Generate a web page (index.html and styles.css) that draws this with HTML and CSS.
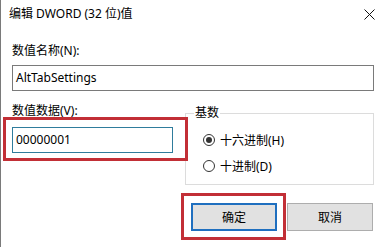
FILE: index.html
```html
<!DOCTYPE html>
<html lang="zh-CN">
<head>
<meta charset="utf-8">
<title>编辑 DWORD (32 位)值</title>
<link rel="stylesheet" href="styles.css">
</head>
<body>
<div class="window">
  <div class="titlebar">
    <span class="title">编辑 DWORD (32 位)值</span>
    <svg class="close" width="11" height="11" viewBox="0 0 11 11"><path d="M0.5 0.5 L10.5 10.5 M10.5 0.5 L0.5 10.5" stroke="#111" stroke-width="1" fill="none"/></svg>
  </div>
  <div class="content">
    <div class="label first">数值名称(N):</div>
    <div class="input name">AltTabSettings</div>
    <div class="row">
      <div class="col-left">
        <div class="label">数值数据(V):</div>
        <div class="input data">00000001</div>
      </div>
      <fieldset class="group">
        <legend>基数</legend>
        <div class="radio"><span class="dot checked"></span><span>十六进制(H)</span></div>
        <div class="radio"><span class="dot"></span><span>十进制(D)</span></div>
      </fieldset>
    </div>
    <div class="buttons">
      <div class="btn default">确定</div>
      <div class="btn">取消</div>
    </div>
  </div>
  <div class="mark mark-data"></div>
  <div class="mark mark-ok"></div>
</div>
</body>
</html>
```
FILE: styles.css
```css
html, body {
  margin: 0;
  padding: 0;
  background: #fff;
}
body {
  font-family: "Noto Sans", "Noto Sans CJK SC", sans-serif;
  font-size: 12px;
  color: #000;
}
.window {
  position: relative;
  width: 384px;
  height: 247px;
  box-sizing: border-box;
  border-left: 1px solid #7a7a7a;
  background: #fff;
  overflow: hidden;
}
.titlebar {
  height: 28px;
  display: flex;
  align-items: center;
  justify-content: space-between;
  padding: 0 9px 0 8px;
}
.title {
  line-height: 16px;
}
.close {
  display: block;
}
.content {
  padding: 0 10px 0 11px;
}
.label {
  line-height: 16px;
  height: 16px;
}
.label.first {
  margin-top: 15px;
}
.input {
  box-sizing: border-box;
  height: 26px;
  line-height: 24px;
  padding-left: 3px;
  border: 1px solid #7a7a7a;
  margin-top: 6px;
}
.row {
  display: flex;
  align-items: flex-start;
  margin-top: 12px;
}
.col-left {
  width: 173px;
  flex: none;
}
.input.data {
  width: 161px;
  margin-top: 8px;
  border-color: #2f7c9c;
}
.group {
  margin: 2px 0 0 0;
  padding: 6px 0 0 17px;
  width: 189px;
  height: 80px;
  box-sizing: border-box;
  border: 1px solid #dcdcdc;
}
.group legend {
  padding: 0 1px;
  margin-left: -9px;
  line-height: 16px;
}
.radio {
  display: flex;
  align-items: center;
  gap: 5px;
  height: 26px;
}
.dot {
  box-sizing: border-box;
  width: 12px;
  height: 12px;
  border: 1px solid #333;
  border-radius: 50%;
  display: flex;
  align-items: center;
  justify-content: center;
}
.dot.checked::after {
  content: "";
  width: 6px;
  height: 6px;
  border-radius: 50%;
  background: #333;
}
.buttons {
  display: flex;
  justify-content: flex-end;
  gap: 10px;
  margin-top: 18px;
  padding-right: 1px;
}
.btn {
  box-sizing: border-box;
  width: 86px;
  height: 28px;
  border: 1px solid #adadad;
  background: #e1e1e1;
  display: flex;
  align-items: center;
  justify-content: center;
}
.btn.default {
  border: 2px solid #1f6fbf;
}
.mark {
  position: absolute;
  box-sizing: border-box;
  border: 3px solid #c22f36;
}
.mark-data {
  left: 2px;
  top: 117px;
  width: 185px;
  height: 44px;
}
.mark-ok {
  left: 180px;
  top: 193px;
  width: 105px;
  height: 47px;
}
```
